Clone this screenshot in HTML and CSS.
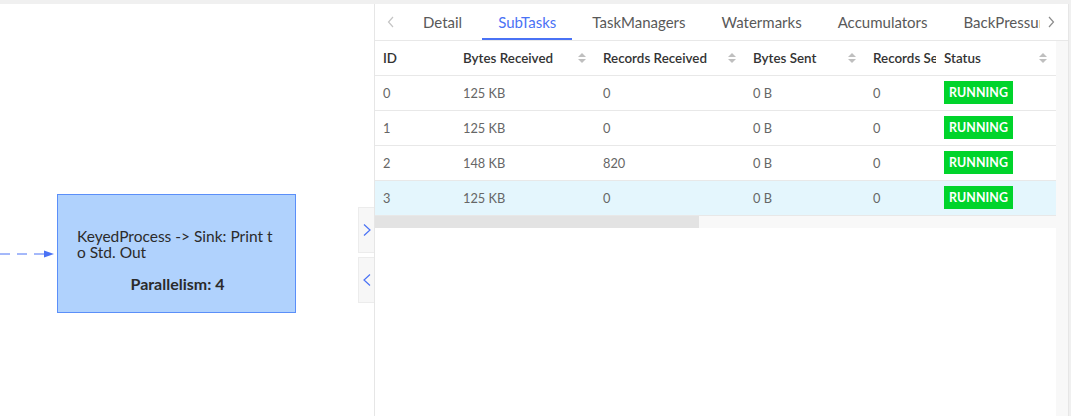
FILE: index.html
```html
<!DOCTYPE html>
<html lang="en">

<head>
    <meta charset="UTF-8">
    <meta name="viewport" content="width=device-width, initial-scale=1.0">
    <title>Job Graph</title>
    <link rel="stylesheet" href="styles.css">
</head>

<body>
    <div class="topBand"></div>
    <div class="Main">
        <div class="Canvas">
            <svg class="edge" width="60" height="12" viewBox="0 0 60 12">
                <line x1="0" y1="6" x2="46" y2="6" stroke="#4a72f5" stroke-width="1" stroke-dasharray="10,7"></line>
                <polygon points="44,2.5 54,6 44,9.5" fill="#4a72f5"></polygon>
            </svg>
            <div class="Node">
                <div class="nodeName">KeyedProcess -&gt; Sink: Print t<br>o Std. Out</div>
                <div class="nodePar">Parallelism: 4</div>
            </div>
            <div class="toggle t1">
                <svg width="10" height="14" viewBox="0 0 10 14"><polyline points="2,1.5 8,7 2,12.5" fill="none" stroke="#4a72f5" stroke-width="1.2"></polyline></svg>
            </div>
            <div class="toggle t2">
                <svg width="10" height="14" viewBox="0 0 10 14"><polyline points="8,1.5 2,7 8,12.5" fill="none" stroke="#4a72f5" stroke-width="1.2"></polyline></svg>
            </div>
        </div>
        <div class="Drawer">
            <div class="Tabs">
                <div class="tabArrow left">
                    <svg width="8" height="12" viewBox="0 0 8 12"><polyline points="6,1 1.5,6 6,11" fill="none" stroke="#c4c4c4" stroke-width="1.2"></polyline></svg>
                </div>
                <div class="tabList">
                    <div class="tab">Detail</div>
                    <div class="tab active">SubTasks</div>
                    <div class="tab">TaskManagers</div>
                    <div class="tab">Watermarks</div>
                    <div class="tab">Accumulators</div>
                    <div class="tab">BackPressure</div>
                    <div class="tab">FlameGraph</div>
                </div>
                <div class="tabArrow right">
                    <svg width="8" height="12" viewBox="0 0 8 12"><polyline points="2,1 6.5,6 2,11" fill="none" stroke="#8c8c8c" stroke-width="1.2"></polyline></svg>
                </div>
            </div>
            <div class="Body">
                <div class="tableArea">
                    <div class="scroller">
                        <table>
                            <colgroup>
                                <col style="width:80px">
                                <col style="width:140px">
                                <col style="width:150px">
                                <col style="width:120px">
                                <col style="width:150px">
                                <col style="width:120px">
                            </colgroup>
                            <thead>
                                <tr>
                                    <th>ID</th>
                                    <th><div class="th">Bytes Received<span class="sorter"></span></div></th>
                                    <th><div class="th">Records Received<span class="sorter"></span></div></th>
                                    <th><div class="th">Bytes Sent<span class="sorter"></span></div></th>
                                    <th><div class="th">Records Sent<span class="sorter"></span></div></th>
                                    <th class="fixed"><div class="th">Status<span class="sorter"></span></div></th>
                                </tr>
                            </thead>
                            <tbody>
                                <tr>
                                    <td>0</td><td>125 KB</td><td>0</td><td>0 B</td><td>0</td>
                                    <td class="fixed"><span class="tag">RUNNING</span></td>
                                </tr>
                                <tr>
                                    <td>1</td><td>125 KB</td><td>0</td><td>0 B</td><td>0</td>
                                    <td class="fixed"><span class="tag">RUNNING</span></td>
                                </tr>
                                <tr>
                                    <td>2</td><td>148 KB</td><td>820</td><td>0 B</td><td>0</td>
                                    <td class="fixed"><span class="tag">RUNNING</span></td>
                                </tr>
                                <tr class="hover">
                                    <td>3</td><td>125 KB</td><td>0</td><td>0 B</td><td>0</td>
                                    <td class="fixed"><span class="tag">RUNNING</span></td>
                                </tr>
                            </tbody>
                        </table>
                    </div>
                    <div class="hScroll"><div class="thumb"></div></div>
                </div>
                <div class="vStrip"></div>
            </div>
        </div>
    </div>
</body>

</html>
```

FILE: styles.css
```css
*{
    margin: 0px;
    padding: 0px;
    box-sizing: border-box;
}

body {
    width: 1071px;
    height: 416px;
    overflow: hidden;
    background-color: #f0f0f0;
    font-family: Lato, "Open Sans", sans-serif;
    font-size: 14px;
    color: #333;
}

.topBand {
    height: 4px;
    background-color: #f0f0f0;
}

.Main {
    display: flex;
    height: 412px;
}

.Canvas {
    position: relative;
    width: 375px;
    height: 100%;
    background-color: white;
    border-right: 1px solid #e6e6e6;
}

.edge {
    position: absolute;
    left: 0px;
    top: 244px;
}

.Node {
    position: absolute;
    left: 57px;
    top: 190px;
    width: 239px;
    height: 119px;
    background-color: #b0d2fd;
    border: 1px solid #5b8ff9;
    display: flex;
    flex-direction: column;
    padding: 33px 8px 0px 19px;
}

.nodeName {
    font-size: 15.5px;
    line-height: 16px;
    color: #2b2b2b;
}

.nodePar {
    margin-top: 14px;
    text-align: center;
    font-weight: bold;
    font-size: 16px;
    color: #2b2b2b;
    padding-right: 9px;
}

.toggle {
    position: absolute;
    right: 0px;
    width: 16px;
    height: 46px;
    background-color: #f7f7f7;
    border: 1px solid #ececec;
    border-right: 0px;
    display: flex;
    align-items: center;
    justify-content: center;
}

.t1 { top: 203px; }
.t2 { top: 253px; }

.Drawer {
    width: 694px;
    height: 100%;
    background-color: white;
    border-right: 1px solid #e6e6e6;
    display: flex;
    flex-direction: column;
}

.Tabs {
    display: flex;
    height: 37px;
    border-bottom: 1px solid #e8e8e8;
}

.tabArrow {
    width: 32px;
    display: flex;
    align-items: center;
    justify-content: center;
}

.tabArrow.right {
    width: 28px;
    justify-content: flex-start;
    padding-left: 7px;
}

.tabList {
    flex: 1;
    display: flex;
    gap: 4px;
    overflow: hidden;
}

.tab {
    flex-shrink: 0;
    padding: 0px 16px;
    display: flex;
    align-items: center;
    font-size: 15px;
    color: #595959;
    border-bottom: 2px solid transparent;
    padding-top: 2px;
}

.tab.active {
    color: #4a72f5;
    border-bottom-color: #4a72f5;
}

.Body {
    flex: 1;
    display: flex;
}

.tableArea {
    width: 681px;
}

.vStrip {
    flex: 1;
    background-color: #f8f8f8;
}

.scroller {
    width: 681px;
    overflow: hidden;
}

table {
    width: 760px;
    border-collapse: collapse;
    table-layout: fixed;
}

th,
td {
    height: 35px;
    padding: 0px 8px;
    text-align: left;
    border-bottom: 1px solid #e8e8e8;
    white-space: nowrap;
    overflow: hidden;
}

th {
    font-weight: 600;
    font-size: 13.4px;
    color: #333;
    height: 34px;
}

td {
    color: #666;
    font-size: 12.8px;
}

.th {
    display: flex;
    align-items: center;
    justify-content: space-between;
}

.sorter {
    width: 8px;
    height: 12px;
    margin-right: 1px;
    display: flex;
    flex-direction: column;
    justify-content: center;
    gap: 2px;
}

.sorter::before,
.sorter::after {
    content: "";
    display: block;
    width: 0px;
    height: 0px;
    border-left: 4px solid transparent;
    border-right: 4px solid transparent;
}

.sorter::before {
    border-bottom: 4px solid #bfbfbf;
}

.sorter::after {
    border-top: 4px solid #bfbfbf;
}

.fixed {
    position: sticky;
    right: 0px;
    background-color: white;
}

tr.hover td,
tr.hover td.fixed {
    background-color: #e4f6fd;
}

.tag {
    display: inline-block;
    background-color: #00d42b;
    color: white;
    font-weight: bold;
    font-size: 12.4px;
    line-height: 23px;
    padding: 0px 5px;
    letter-spacing: 0.1px;
    vertical-align: middle;
}

.hScroll {
    height: 12px;
    background-color: #f8f8f8;
}

.thumb {
    width: 324px;
    height: 100%;
    background-color: #e3e3e3;
}
```
